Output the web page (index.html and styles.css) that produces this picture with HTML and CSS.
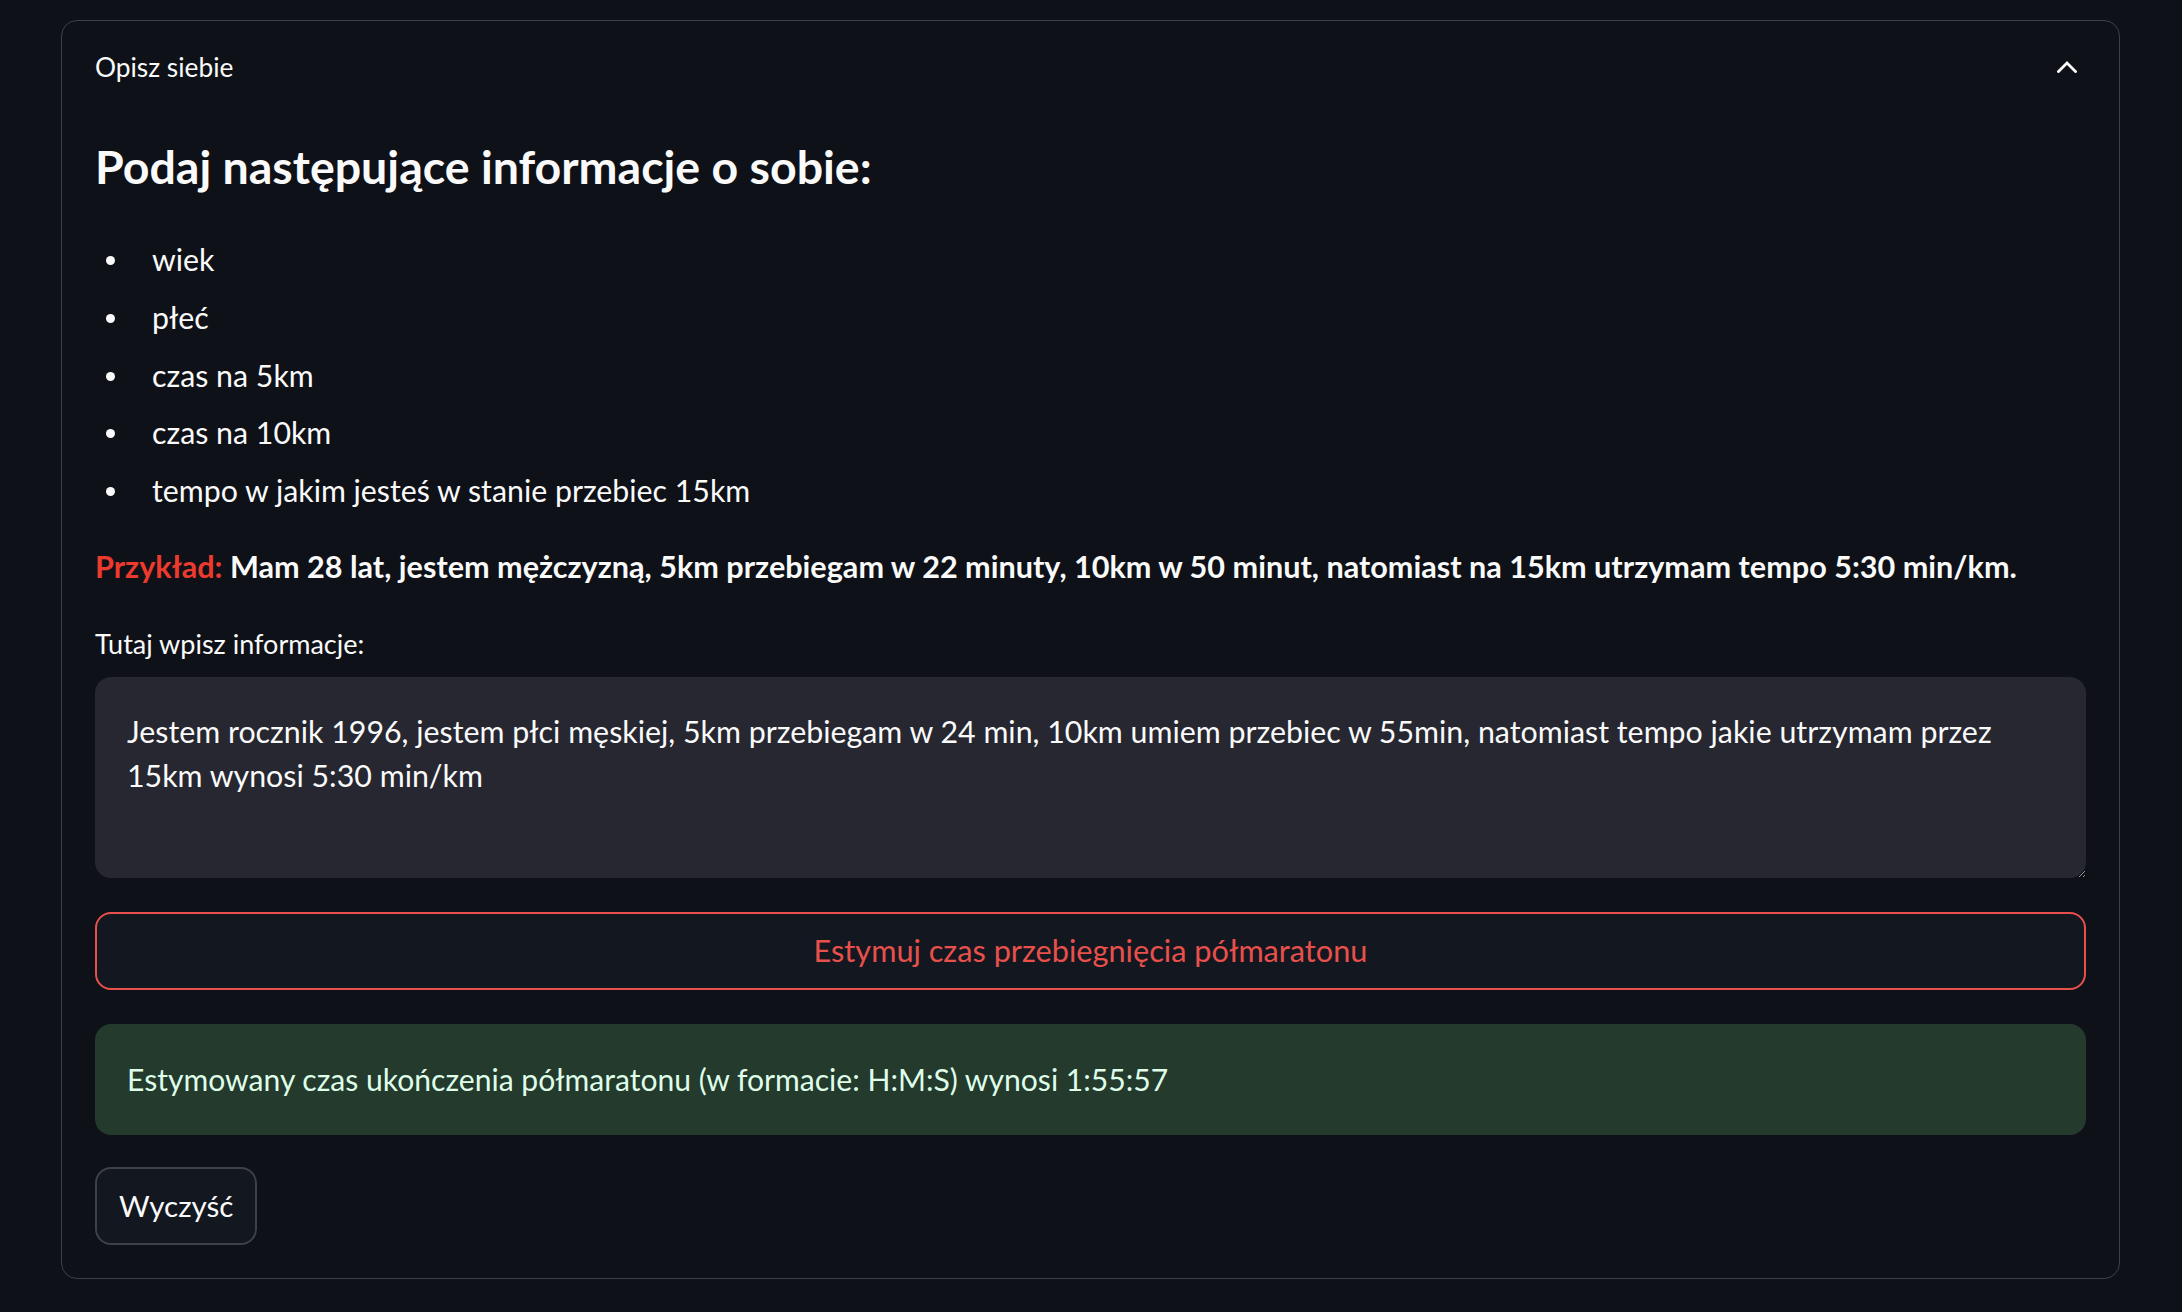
FILE: index.html
```html
<!DOCTYPE html>
<html lang="pl">
<head>
<meta charset="utf-8">
<title>Opisz siebie</title>
<link rel="stylesheet" href="styles.css">
</head>
<body>
<div class="page">
  <section class="expander">
    <div class="summary">
      <span class="summary-label">Opisz siebie</span>
      <svg class="chevron" width="20" height="12" viewBox="0 0 20 12"><polyline points="1.5,10.5 10,2 18.5,10.5" fill="none" stroke="#fafafa" stroke-width="2.8" stroke-linecap="square"/></svg>
    </div>
    <div class="content">
      <h3 class="heading">Podaj następujące informacje o sobie:</h3>
      <ul class="list">
        <li>wiek</li>
        <li>płeć</li>
        <li>czas na 5km</li>
        <li>czas na 10km</li>
        <li>tempo w jakim jesteś w stanie przebiec 15km</li>
      </ul>
      <p class="example"><span class="red">Przykład:</span> Mam 28 lat, jestem mężczyzną, 5km przebiegam w 22 minuty, 10km w 50 minut, natomiast na 15km utrzymam tempo 5:30 min/km.</p>
      <label class="label" for="info">Tutaj wpisz informacje:</label>
      <textarea id="info" class="textarea">Jestem rocznik 1996, jestem płci męskiej, 5km przebiegam w 24 min, 10km umiem przebiec w 55min, natomiast tempo jakie utrzymam przez 15km wynosi 5:30 min/km</textarea>
      <button class="btn btn-primary" type="button">Estymuj czas przebiegnięcia półmaratonu</button>
      <div class="success">Estymowany czas ukończenia półmaratonu (w formacie: H:M:S) wynosi 1:55:57</div>
      <div class="actions"><button class="btn btn-secondary" type="button">Wyczyść</button></div>
    </div>
  </section>
</div>
</body>
</html>
```

FILE: styles.css
```css
html, body {
  margin: 0;
  padding: 0;
  background: #0e1117;
}
body {
  font-family: "Lato", "Liberation Sans", sans-serif;
  color: #fafafa;
}
.page {
  padding: 20px 62px 34px 61px;
}
.expander {
  border: 1px solid #3d4047;
  border-radius: 16px;
}
.summary {
  display: flex;
  align-items: center;
  justify-content: space-between;
  padding: 26px 33px;
  height: 40px;
}
.summary-label {
  font-size: 26.3px;
  line-height: 40px;
}
.chevron {
  margin-right: 9px;
  display: block;
}
.content {
  display: flex;
  flex-direction: column;
  padding: 0 33px 33px;
}
.heading {
  margin: 27px 0 0;
  font-size: 46.5px;
  line-height: 53px;
  font-weight: 700;
}
.list {
  list-style: none;
  margin: 44px 0 0;
  padding: 0;
  display: flex;
  flex-direction: column;
  gap: 12.75px;
}
.list li {
  display: flex;
  align-items: center;
  font-size: 30.3px;
  line-height: 45px;
}
.list li::before {
  content: "";
  flex: none;
  width: 9px;
  height: 9px;
  border-radius: 50%;
  background: #fafafa;
  margin: 2px 37px 0 11px;
}
.example {
  margin: 31px 0 0;
  font-size: 30.6px;
  line-height: 45px;
  font-weight: 700;
}
.red {
  color: #ec3a2e;
}
.label {
  margin-top: 38.5px;
  font-size: 27px;
  line-height: 32px;
}
.textarea {
  margin-top: 17px;
  box-sizing: border-box;
  height: 201px;
  width: 100%;
  padding: 32px;
  border: none;
  border-radius: 16px;
  background: #262730;
  color: #fafafa;
  font-family: "Lato", "Liberation Sans", sans-serif;
  font-size: 30.35px;
  line-height: 44.8px;
  color-scheme: dark;
  outline: none;
  overflow: hidden;
}
.btn {
  box-sizing: border-box;
  height: 78px;
  border-radius: 16px;
  background: #13171f;
  font-family: "Lato", "Liberation Sans", sans-serif;
  cursor: pointer;
}
.btn-primary {
  margin-top: 34px;
  width: 100%;
  border: 2px solid #e8504c;
  color: #e8504c;
  font-size: 30.7px;
}
.success {
  margin-top: 34px;
  box-sizing: border-box;
  height: 111px;
  display: flex;
  align-items: center;
  padding: 0 32px;
  border-radius: 16px;
  background: #233a2d;
  color: #dffde9;
  font-size: 30.1px;
}
.actions {
  margin-top: 32px;
  display: flex;
}
.btn-secondary {
  padding: 0 22px;
  border: 2px solid #3e4148;
  color: #fafafa;
  font-size: 29.6px;
}
```
